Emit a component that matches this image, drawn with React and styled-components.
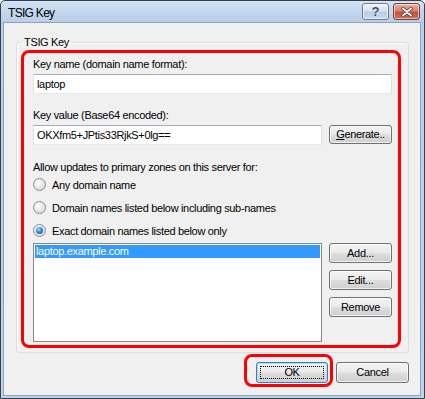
import styled, { createGlobalStyle } from 'styled-components';

const GlobalStyle = createGlobalStyle`
  body {
    margin: 0;
    background: #ffffff;
    font-family: "Liberation Sans", Arial, sans-serif;
  }
`;

const Window = styled.div`
  width: 425px;
  height: 399px;
  box-sizing: border-box;
  border: 1px solid #34404e;
  border-radius: 5px 5px 0 0;
  padding: 0 3px 2px 2px;
  display: flex;
  flex-direction: column;
  background: linear-gradient(#d4e3f4 0px, #c1d5ec 12px, #b9cee8 21px, #bfd3ea 100%);
`;

const TitleBar = styled.div`
  height: 21px;
  display: flex;
  align-items: flex-start;
  padding-left: 5px;
`;

const Title = styled.span`
  font-size: 12px;
  line-height: 14px;
  letter-spacing: -0.7px;
  margin-top: 5px;
  color: #000;
`;

const CaptionButtons = styled.div`
  margin-left: auto;
  margin-right: 1px;
  margin-top: 2px;
  display: flex;
  gap: 4px;
`;

const CaptionButton = styled.div`
  width: 27px;
  height: 17px;
  box-sizing: border-box;
  border: 1px solid ${p => (p.$close ? '#74433a' : '#6a7d95')};
  border-radius: 3px;
  display: flex;
  align-items: center;
  justify-content: center;
  background: ${p =>
    p.$close
      ? 'linear-gradient(#eab0a3 0%, #d8826f 45%, #c6513e 55%, #cf6d58 100%)'
      : 'linear-gradient(#eef4fb 0%, #d3e1f1 45%, #b9cde5 55%, #c8d9ee 100%)'};
  box-shadow: inset 0 0 0 1px rgba(255, 255, 255, 0.55);
`;

const HelpGlyph = styled.span`
  font: bold 13px/13px "Liberation Sans", Arial, sans-serif;
  color: #3a4a5e;
  text-shadow: 0 0 1px #fff, 0 0 1px #fff;
`;

const Body = styled.div`
  flex: 1;
  background: #f0f0f0;
  border: 1px solid #8ea2ba;
  padding: 12px 11px 0 12px;
  display: flex;
  flex-direction: column;
  font-size: 11px;
  letter-spacing: -0.33px;
  color: #000;
`;

const GroupBox = styled.fieldset`
  margin: 0;
  min-width: 0;
  border: 1px solid #d5dfe5;
  border-radius: 3px;
  padding: 1px 7px 4px 4px;
  box-shadow: inset 1px 1px 0 #fff;
`;

const Legend = styled.legend`
  font-size: 11px;
  line-height: 14px;
  padding: 0 2px;
  margin-left: 1px;
`;

const Highlight = styled.div`
  border: 3px solid #ff0000;
  border-radius: 8px;
  padding: ${p => p.$pad};
`;

const Label = styled.div`
  line-height: 13px;
  margin-top: ${p => p.$top || 0}px;
  margin-bottom: 3px;
`;

const Row = styled.div`
  display: flex;
  gap: 7px;
  align-items: flex-start;
`;

const TextBox = styled.div`
  width: ${p => p.$width}px;
  height: 20px;
  box-sizing: border-box;
  background: #fff;
  border: 1px solid;
  border-color: #abadb3 #dbdfe6 #e3e9ef #e2e3ea;
  padding: 0 3px;
  line-height: 18px;
  white-space: nowrap;
`;

const Button = styled.button`
  width: ${p => p.$width || 63}px;
  height: ${p => p.$height || 20}px;
  box-sizing: border-box;
  margin: 0;
  margin-top: ${p => p.$top || 0}px;
  padding: 0;
  font: 11px/1 "Liberation Sans", Arial, sans-serif;
  letter-spacing: -0.33px;
  color: #000;
  border: 1px solid ${p => (p.$default ? '#3c7fb1' : '#707070')};
  border-radius: 3px;
  background: linear-gradient(#f2f2f2 0%, #ebebeb 48%, #dddddd 52%, #cfcfcf 100%);
  box-shadow: inset 0 0 0 1px ${p => (p.$default ? '#b2dcf4' : 'rgba(255,255,255,0.7)')};
  display: flex;
  align-items: center;
  justify-content: center;
`;

const FocusRect = styled.span`
  display: flex;
  align-items: center;
  justify-content: center;
  width: calc(100% - 6px);
  height: calc(100% - 6px);
  border: 1px dotted #000;
  box-sizing: border-box;
`;

const RadioList = styled.div`
  display: flex;
  flex-direction: column;
  gap: 6px;
  margin-top: -1px;
  margin-bottom: 4px;
`;

const RadioRow = styled.div`
  height: 17px;
  display: flex;
  align-items: center;
  gap: 6px;
`;

const RadioCircle = styled.span`
  width: 13px;
  height: 13px;
  box-sizing: border-box;
  border-radius: 50%;
  border: 1px solid #8c8e90;
  background: radial-gradient(circle at 40% 35%, #ffffff 0%, #e6e6e6 50%, #cfcfcf 100%);
  display: flex;
  align-items: center;
  justify-content: center;

  &::after {
    content: '';
    display: ${p => (p.$checked ? 'block' : 'none')};
    width: 7px;
    height: 7px;
    border-radius: 50%;
    background: radial-gradient(circle at 40% 35%, #9fe2ff 0%, #2a8fd0 45%, #0d4f86 100%);
  }
`;

const ListArea = styled.div`
  display: flex;
  gap: 7px;
`;

const ListBox = styled.div`
  width: 289px;
  height: 99px;
  box-sizing: border-box;
  background: #fff;
  border: 1px solid #828790;
  padding: 1px 1px 0;
`;

const ListItem = styled.div`
  height: 13px;
  line-height: 13px;
  padding-left: 1px;
  background: ${p => (p.$selected ? '#3399ff' : 'transparent')};
  color: ${p => (p.$selected ? '#fff' : '#000')};
`;

const SideButtons = styled.div`
  display: flex;
  flex-direction: column;
  gap: 7px;
`;

const Footer = styled.div`
  display: flex;
  justify-content: flex-end;
  align-items: flex-start;
  gap: 3px;
  margin-top: 1px;
`;

export default function App() {
  return (
    <>
      <GlobalStyle />
      <Window>
        <TitleBar>
          <Title>TSIG Key</Title>
          <CaptionButtons>
            <CaptionButton>
              <HelpGlyph>?</HelpGlyph>
            </CaptionButton>
            <CaptionButton $close>
              <svg width="12" height="10" viewBox="0 0 12 10">
                <path d="M2 1.5 L10 8.5 M10 1.5 L2 8.5" stroke="#5a2a22" strokeWidth="3.4" strokeLinecap="round" />
                <path d="M2 1.5 L10 8.5 M10 1.5 L2 8.5" stroke="#ffffff" strokeWidth="2" strokeLinecap="round" />
              </svg>
            </CaptionButton>
          </CaptionButtons>
        </TitleBar>
        <Body>
          <GroupBox>
            <Legend>TSIG Key</Legend>
            <Highlight $pad="5px 6px 3px 9px">
              <Label>Key name (domain name format):</Label>
              <TextBox $width={359}>laptop</TextBox>

              <Label $top={15}>Key value (Base64 encoded):</Label>
              <Row>
                <TextBox $width={289}>OKXfm5+JPtis33RjkS+0lg==</TextBox>
                <Button $height={19}>
                  <span>
                    <u>G</u>enerate..
                  </span>
                </Button>
              </Row>

              <Label $top={16}>Allow updates to primary zones on this server for:</Label>
              <RadioList>
                <RadioRow>
                  <RadioCircle />
                  <span>Any domain name</span>
                </RadioRow>
                <RadioRow>
                  <RadioCircle />
                  <span>Domain names listed below including sub-names</span>
                </RadioRow>
                <RadioRow>
                  <RadioCircle $checked />
                  <span>Exact domain names listed below only</span>
                </RadioRow>
              </RadioList>

              <ListArea>
                <ListBox>
                  <ListItem $selected>laptop.example.com</ListItem>
                </ListBox>
                <SideButtons>
                  <Button>Add...</Button>
                  <Button>Edit...</Button>
                  <Button>Remove</Button>
                </SideButtons>
              </ListArea>
            </Highlight>
          </GroupBox>

          <Footer>
            <Highlight $pad="5px 2px 1px 9px">
              <Button $default $width={72} $height={21}>
                <FocusRect>OK</FocusRect>
              </Button>
            </Highlight>
            <Button $width={73} $height={21} $top={8}>Cancel</Button>
          </Footer>
        </Body>
      </Window>
    </>
  );
}
